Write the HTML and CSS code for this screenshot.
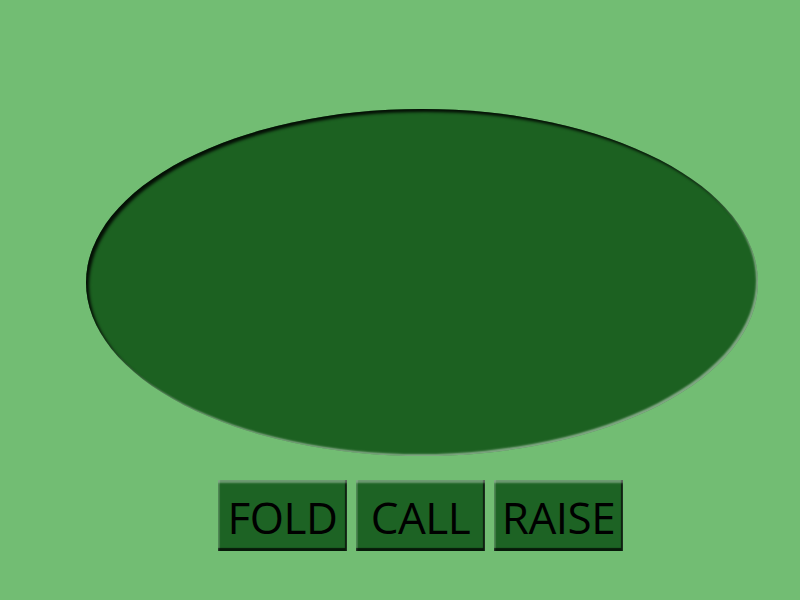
FILE: index.html
```html
<!DOCTYPE html>
<html lang="en">
<head>
  <meta charset="UTF-8">
  <title>Poker</title>
  <link rel="stylesheet" href="styles.css">
</head>
<body>
  <div class="table-area">
    <div class="table"></div>
    <div class="actions">
      <button class="action">FOLD</button>
      <button class="action">CALL</button>
      <button class="action">RAISE</button>
    </div>
  </div>
</body>
</html>
```

FILE: styles.css
```css
body {
  margin: 0;
  background-color: #72bd73;
  font-family: "Open Sans", sans-serif;
}
.table-area {
  margin-left: 86px;
  width: 672px;
  padding-top: 109px;
}
.table {
  height: 347px;
  border-radius: 50%;
  background-color: #1c6121;
  box-shadow: inset 3px 3px 3px rgba(0, 0, 0, 0.85), inset -2px -2px 2px rgba(255, 255, 255, 0.45);
}
.actions {
  display: flex;
  gap: 9px;
  margin-top: 24px;
  padding-left: 132px;
}
.action {
  width: 129px;
  height: 71px;
  padding: 2px 0 0;
  background-color: #1d6324;
  color: #000;
  font-family: "Open Sans", sans-serif;
  font-size: 44px;
  letter-spacing: -0.5px;
  border: none;
  box-shadow: inset 0 3px 2px rgba(255, 255, 255, 0.35), inset -2px -3px 1px rgba(0, 0, 0, 0.75), inset 2px 0 1px rgba(255, 255, 255, 0.15);
  cursor: pointer;
}
```
